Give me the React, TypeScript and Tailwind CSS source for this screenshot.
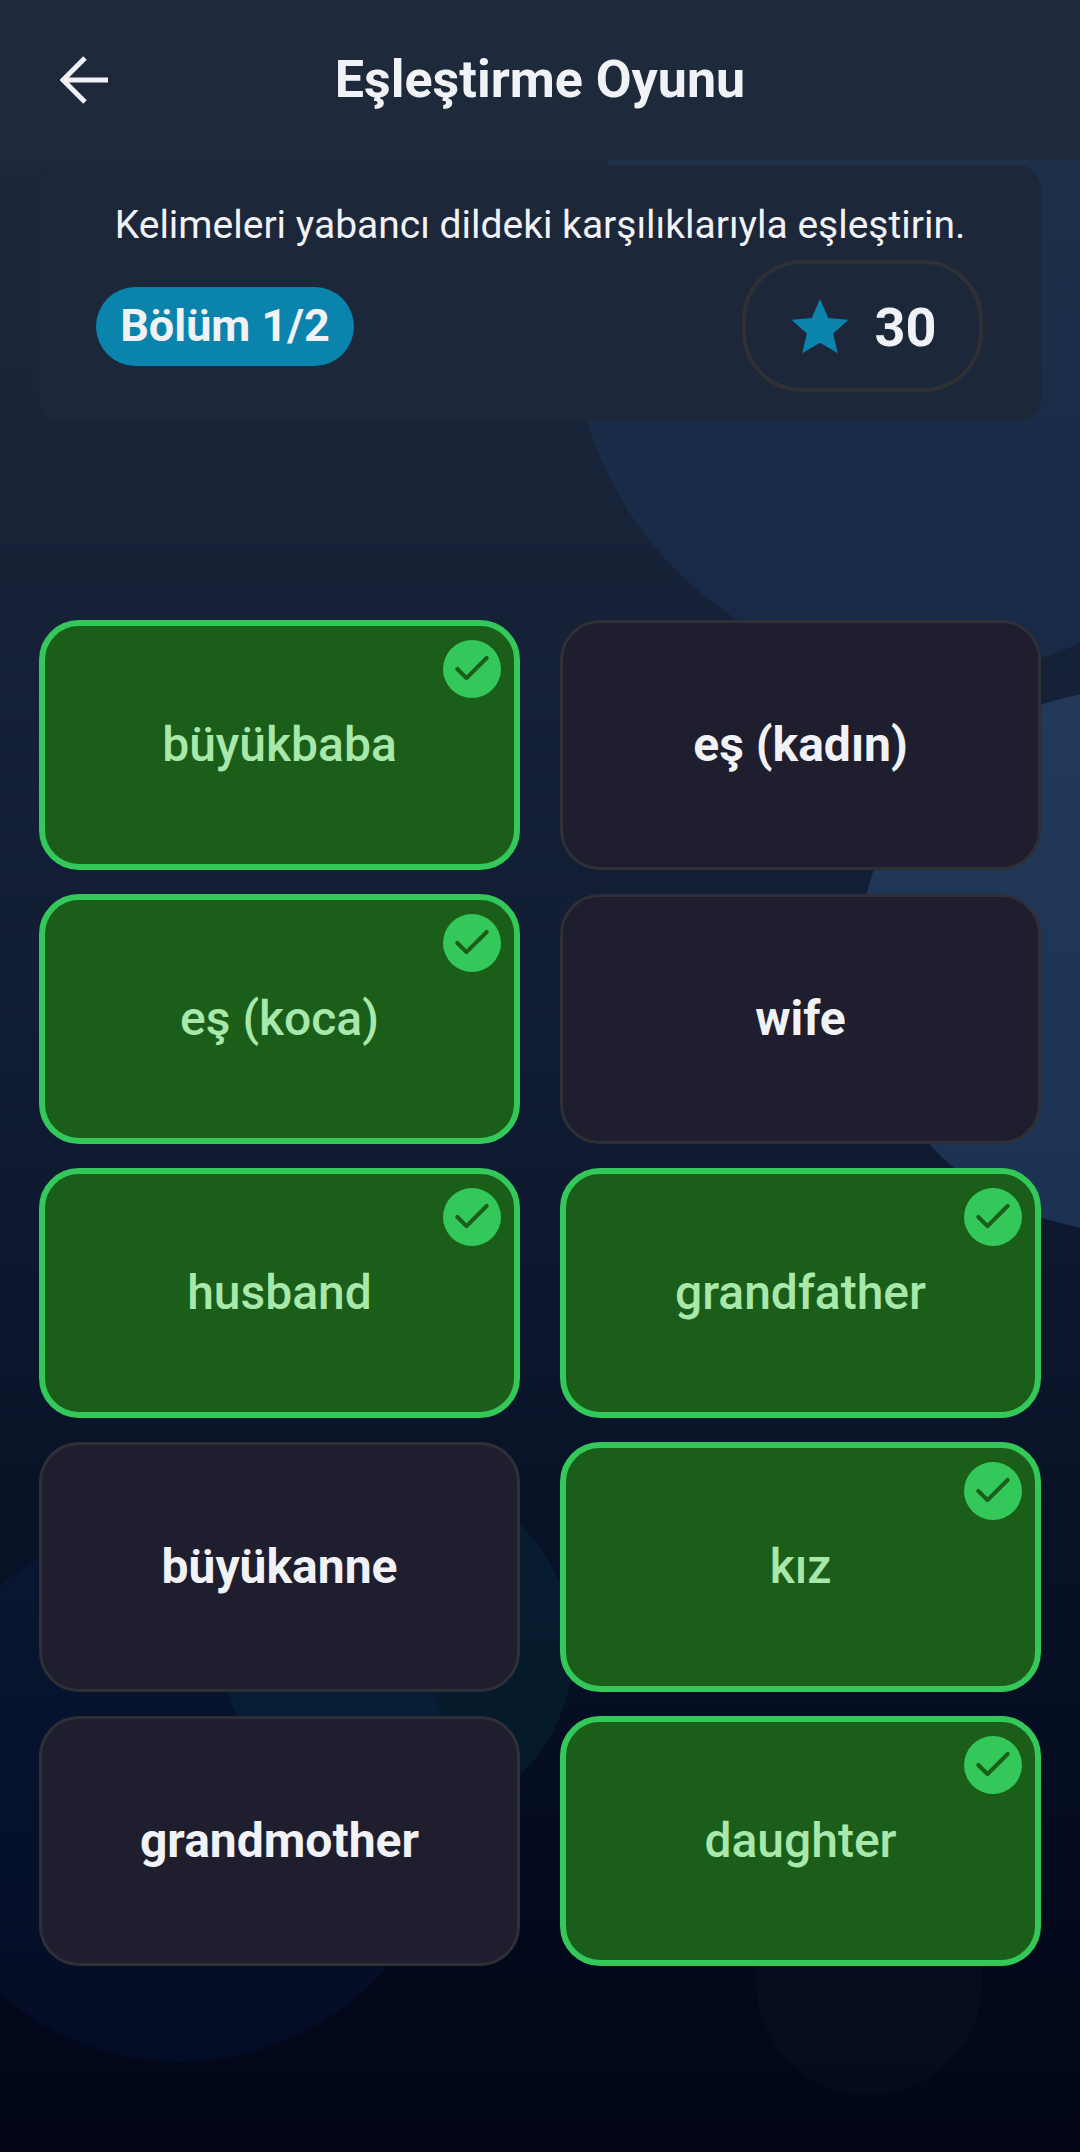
import { Check } from "lucide-react";

const CARDS = [
  { label: "büyükbaba", done: true },
  { label: "eş (kadın)", done: false },
  { label: "eş (koca)", done: true },
  { label: "wife", done: false },
  { label: "husband", done: true },
  { label: "grandfather", done: true },
  { label: "büyükanne", done: false },
  { label: "kız", done: true },
  { label: "grandmother", done: false },
  { label: "daughter", done: true },
];

function WordCard({ label, done }: { label: string; done: boolean }) {
  if (done) {
    return (
      <div className="relative flex h-[250px] items-center justify-center rounded-[40px] border-[6px] border-[#34c759] bg-[#1a5e1a]">
        <span className="text-[48px] font-medium text-[#a8e8ab]">{label}</span>
        <span className="absolute right-[13px] top-[14px] flex h-[58px] w-[58px] items-center justify-center rounded-full bg-[#34c759]">
          <Check size={44} strokeWidth={2.2} className="text-[#1a5e1a]" />
        </span>
      </div>
    );
  }
  return (
    <div className="flex h-[250px] items-center justify-center rounded-[40px] border-[3px] border-[#2f3036] bg-[#1e1e2e]">
      <span className="text-[48px] font-bold text-[#f1f2f6]">{label}</span>
    </div>
  );
}

export default function App() {
  return (
    <div className="relative h-[2152px] w-[1080px] overflow-hidden bg-gradient-to-b from-[#1e293b] via-[#101c33] to-[#020617] font-['Roboto',sans-serif]">
      {/* background blobs */}
      <div className="absolute left-[572px] top-[-40px] h-[716px] w-[716px] rounded-full bg-[#3b82f6]/[0.09]" />
      <div className="absolute left-[858px] top-[690px] h-[542px] w-[542px] rounded-full bg-[#60a5fa]/[0.18]" />
      <div className="absolute left-[-92px] top-[1518px] h-[544px] w-[544px] rounded-full bg-[#2563eb]/[0.06]" />
      <div className="absolute left-[223px] top-[1475px] h-[350px] w-[350px] rounded-full bg-[#14b8a6]/[0.07]" />
      <div className="absolute left-[756px] top-[1869px] h-[226px] w-[226px] rounded-full bg-white/[0.02]" />

      <div className="relative">
        <header className="grid h-[160px] grid-cols-[1fr_auto_1fr] items-center bg-[#1e293b] px-[60px]">
          <svg viewBox="0 0 48 48" className="h-[48px] w-[48px] text-[#f1f2f6]" fill="none" stroke="currentColor" strokeWidth="5">
            <path d="M48 24H3M25 2 3 24l22 22" />
          </svg>
          <h1 className="text-[52px] font-bold text-[#f1f2f6]">Eşleştirme Oyunu</h1>
        </header>

        <section className="mx-[39px] mt-[5px] h-[257px] rounded-[24px] bg-[#1c273a] pt-[36px]">
          <p className="text-center text-[39px] leading-[48px] text-[#f1f2f6]">
            Kelimeleri yabancı dildeki karşılıklarıyla eşleştirin.
          </p>
          <div className="mt-[11px] flex items-center justify-between pl-[57px] pr-[58px]">
            <span className="flex h-[79px] w-[258px] items-center justify-center rounded-full bg-[#0b84ad] text-[45px] font-bold text-[#f1f2f6]">
              Bölüm 1/2
            </span>
            <div className="flex h-[132px] w-[241px] items-center justify-center gap-[24px] rounded-[60px] border-[4px] border-[#2f3036]">
              <svg viewBox="0 0 24 24" className="h-[62px] w-[62px] fill-[#0b84ad]">
                <path d="M12 1.5 15.2 8.9 23 9.6 17.1 14.9 18.9 22.5 12 18.5 5.1 22.5 6.9 14.9 1 9.6 8.8 8.9Z" />
              </svg>
              <span className="pt-[3px] text-[54px] font-bold text-[#f1f2f6]">30</span>
            </div>
          </div>
        </section>

        <div className="mx-[39px] mt-[198px] grid grid-cols-2 gap-x-[40px] gap-y-[24px]">
          {CARDS.map((c) => (
            <WordCard key={c.label} label={c.label} done={c.done} />
          ))}
        </div>
      </div>
    </div>
  );
}
